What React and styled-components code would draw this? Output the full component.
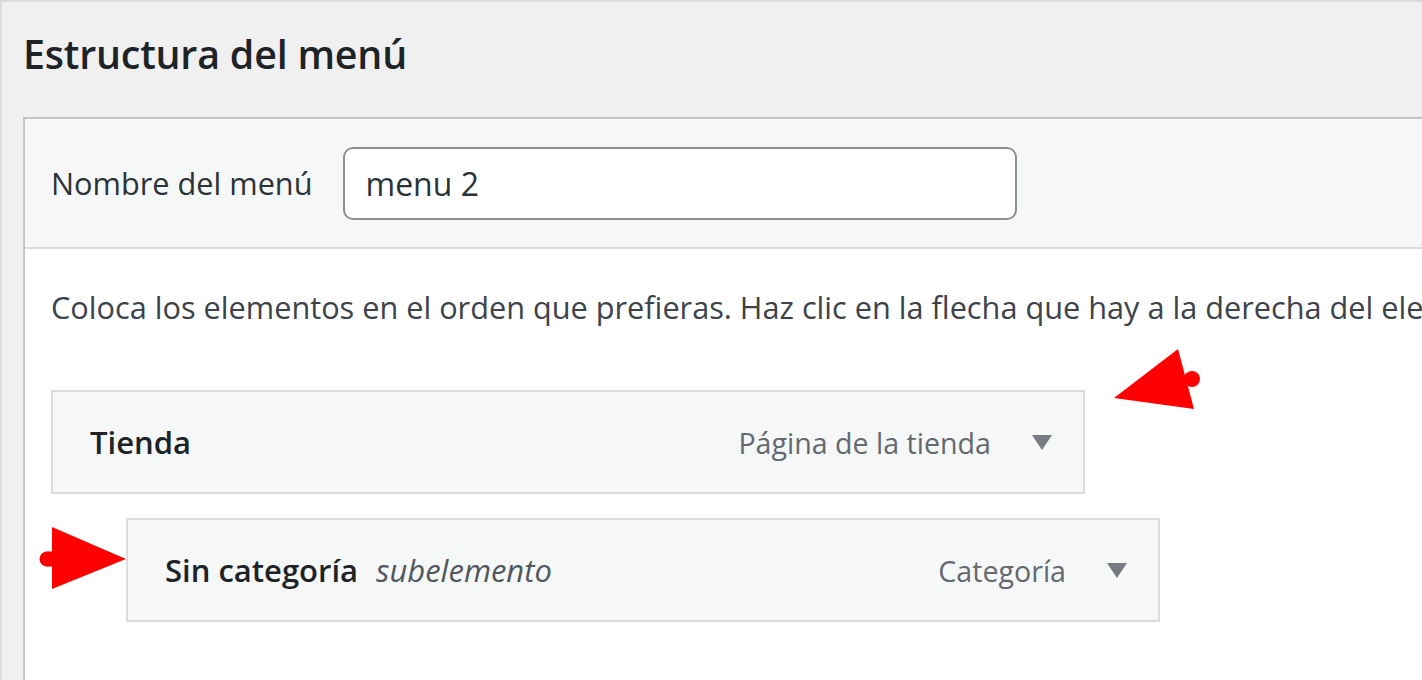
import React from "react";
import styled, { createGlobalStyle } from "styled-components";

const GlobalStyle = createGlobalStyle`
  html, body {
    margin: 0;
    padding: 0;
    overflow: hidden;
    background: #f0f0f1;
  }
  body {
    font-family: "Open Sans", "Noto Sans", "Liberation Sans", sans-serif;
    color: #3c434a;
  }
`;

// Page wrapper
const Page = styled.div`
  position: relative;
  height: 680px;
  box-sizing: border-box;
  border-top: 2px solid #dcdcde;
  border-left: 2px solid #dcdcde;
  padding-left: 21px;
  overflow: hidden;
`;

const Heading = styled.h2`
  margin: 0;
  padding: 25px 0 0 0;
  height: 115px;
  box-sizing: border-box;
  font-size: 39.4px;
  font-weight: 600;
  color: #1d2327;
  letter-spacing: -0.2px;
`;

const MenuEdit = styled.div`
  width: 1500px;
  height: 600px;
  border: 2px solid #c3c4c7;
  background: #ffffff;
`;

const EditHeader = styled.div`
  display: flex;
  align-items: center;
  gap: 30px;
  height: 128px;
  padding-left: 26px;
  background: #f6f7f7;
  border-bottom: 2px solid #dcdcde;
`;

const Label = styled.label`
  font-size: 30.7px;
  color: #2c3338;
`;

const NameInput = styled.input`
  width: 674px;
  height: 73px;
  box-sizing: border-box;
  padding: 0 21px;
  border: 2px solid #8c8f94;
  border-radius: 10px;
  background: #ffffff;
  font-family: inherit;
  font-size: 32px;
  color: #2c3338;
  outline: none;
`;

const EditBody = styled.div`
  padding: 34px 0 0 26px;
`;

const Intro = styled.p`
  margin: 0 0 59px 0;
  font-size: 30.7px;
  line-height: 48px;
  white-space: nowrap;
  color: #3c434a;
`;

const ItemList = styled.div`
  display: flex;
  flex-direction: column;
  gap: 24px;
`;

const Item = styled.div`
  display: flex;
  align-items: center;
  width: 1034px;
  height: 104px;
  box-sizing: border-box;
  margin-left: ${(p) => p.$depth * 75}px;
  padding: 0 31px 0 37px;
  background: #f6f7f7;
  border: 2px solid #dcdcde;
`;

const ItemTitle = styled.span`
  font-size: 31px;
  font-weight: 600;
  color: #1d2327;
`;

const SubLabel = styled.span`
  margin-left: 18px;
  font-size: 31px;
  font-style: italic;
  color: #50575e;
`;

const ItemType = styled.span`
  margin-left: auto;
  font-size: 28.6px;
  color: #646970;
`;

const Toggle = styled.span`
  margin-left: 41px;
  width: 0;
  height: 0;
  border-left: 10px solid transparent;
  border-right: 10px solid transparent;
  border-top: 15px solid #787c82;
`;

const Pointer = styled.svg`
  position: absolute;
  left: ${(p) => p.$x}px;
  top: ${(p) => p.$y}px;
`;

function RedArrowLeft() {
  return (
    <Pointer $x={1105} $y={340} width="100" height="75" viewBox="0 0 100 75">
      <circle cx="85" cy="37" r="8" fill="#ff0000" />
      <polygon points="7,56 71,7 87,67" fill="#ff0000" />
    </Pointer>
  );
}

function RedArrowRight() {
  return (
    <Pointer $x={30} $y={520} width="100" height="72" viewBox="0 0 100 72">
      <circle cx="15" cy="37" r="7.5" fill="#ff0000" />
      <rect x="15" y="29.5" width="8" height="15" fill="#ff0000" />
      <polygon points="94,37 20,5 20,67" fill="#ff0000" />
    </Pointer>
  );
}

const items = [
  { title: "Tienda", type: "Página de la tienda", depth: 0 },
  { title: "Sin categoría", type: "Categoría", depth: 1, sub: "subelemento" },
];

export default function App() {
  return (
    <>
      <GlobalStyle />
      <Page>
        <Heading>Estructura del menú</Heading>
        <MenuEdit>
          <EditHeader>
            <Label>Nombre del menú</Label>
            <NameInput defaultValue="menu 2" />
          </EditHeader>
          <EditBody>
            <Intro>
              Coloca los elementos en el orden que prefieras. Haz clic en la
              flecha que hay a la derecha del elemento para mostrar más
              opciones de configuración.
            </Intro>
            <ItemList>
              {items.map((it) => (
                <Item key={it.title} $depth={it.depth}>
                  <ItemTitle>{it.title}</ItemTitle>
                  {it.sub && <SubLabel>{it.sub}</SubLabel>}
                  <ItemType>{it.type}</ItemType>
                  <Toggle />
                </Item>
              ))}
            </ItemList>
          </EditBody>
        </MenuEdit>
        <RedArrowLeft />
        <RedArrowRight />
      </Page>
    </>
  );
}
